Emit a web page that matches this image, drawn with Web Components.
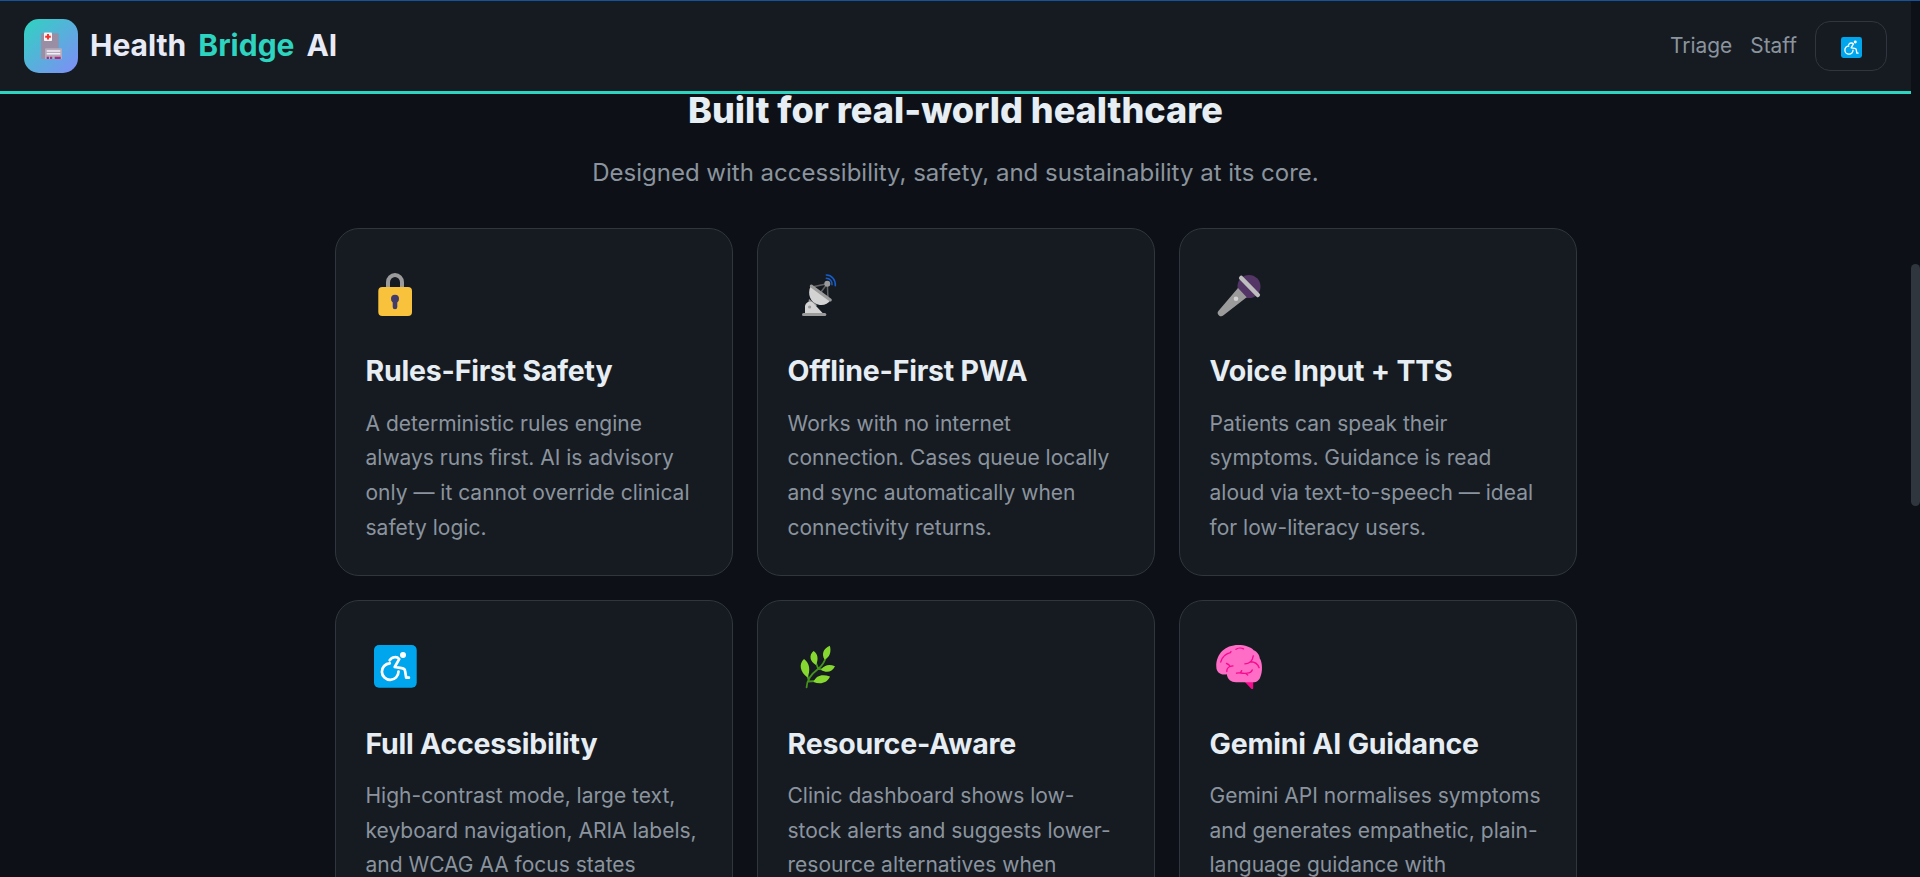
<!DOCTYPE html>
<html lang="en">
<head>
<meta charset="utf-8">
<title>Health Bridge AI</title>
<style>
:root {
	--bg: #0d1117;
	--surface: #161b22;
	--line: #30363d;
	--text: #e6edf3;
	--muted: #8b949e;
	--teal: #2dd4bf;
}
html, body { height: 100%; }
body {
	margin: 0;
	overflow: hidden;
	background: var(--bg);
	color: var(--text);
	font-family: Inter, "Liberation Sans", sans-serif;
}
</style>
</head>
<body>
<hb-page>
	<hb-header slot="header">
		<hb-link>Triage</hb-link>
		<hb-link>Staff</hb-link>
	</hb-header>
	<hb-section>
		<span slot="title">Built for real-world healthcare</span>
		<span slot="lead">Designed with accessibility, safety, and sustainability at its core.</span>
		<hb-card icon="lock"><span slot="title">Rules-First Safety</span>A deterministic rules engine<br>always runs first. AI is advisory<br>only — it cannot override clinical<br>safety logic.</hb-card>
		<hb-card icon="dish"><span slot="title">Offline-First PWA</span>Works with no internet<br>connection. Cases queue locally<br>and sync automatically when<br>connectivity returns.</hb-card>
		<hb-card icon="mic"><span slot="title">Voice Input + TTS</span>Patients can speak their<br>symptoms. Guidance is read<br>aloud via text-to-speech — ideal<br>for low-literacy users.</hb-card>
		<hb-card icon="access"><span slot="title">Full Accessibility</span>High-contrast mode, large text,<br>keyboard navigation, ARIA labels,<br>and WCAG AA focus states</hb-card>
		<hb-card icon="herb"><span slot="title">Resource-Aware</span>Clinic dashboard shows low-<br>stock alerts and suggests lower-<br>resource alternatives when</hb-card>
		<hb-card icon="brain"><span slot="title">Gemini AI Guidance</span>Gemini API normalises symptoms<br>and generates empathetic, plain-<br>language guidance with</hb-card>
	</hb-section>
</hb-page>

<script>
const icons = {
	lock: ['0 0 58 72', `
		<path d="M22 30V23.2a7 7.2 0 0 1 14 0V30" fill="none" stroke="#9b9b9b" stroke-width="4"/>
		<rect x="12.3" y="28" width="33.7" height="29" rx="4" fill="#f9c23c"/>
		<path d="M29 40v8" stroke="#433b6b" stroke-width="4.6" stroke-linecap="round"/>
		<circle cx="29" cy="39.8" r="4" fill="#433b6b"/>`],
	dish: ['0 0 58 72', `
		<path d="M24 28l15.3-3.3L33 33M39.3 24.7l.7 15" fill="none" stroke="#636363" stroke-width="1.5"/>
		<path d="M21 40l8 6-3 4-6-5z" fill="#9b9b9b"/>
		<path d="M17 54.5v-7.5a5 5 0 0 1 8-3.2L35 54.5z" fill="#d3d3d3"/>
		<circle cx="21.6" cy="48" r="1.6" fill="#9b9b9b"/>
		<path d="M22.5 27.5C19 35 22.5 43.5 30 45.5C35 47 40 45 42.3 41.5z" fill="#d3d3d3"/>
		<path d="M23.3 27l19 14" stroke="#9b9b9b" stroke-width="3" stroke-linecap="round"/>
		<rect x="14" y="54" width="24.3" height="3" rx="1.5" fill="#9b9b9b"/>
		<circle cx="39.3" cy="24.8" r="3" fill="#9b9b9b"/>
		<path d="M38.3 16c5.5 0 9.5 5 9 10.8M38.3 19.3c3.6 0 6.1 3 5.7 6.4" fill="none" stroke="#155ecb" stroke-width="1.5" stroke-linecap="round"/>`],
	mic: ['0 0 58 72', `
		<circle cx="39" cy="27.5" r="11.5" fill="#533566"/>
		<path d="M28 29l8.7 9.3L13.5 56.2a3.3 3.3 0 0 1-4.7-4.8z" fill="#9b9b9b"/>
		<path d="M31.2 19l16.6 17" stroke="#bebebe" stroke-width="4.5" stroke-linecap="round"/>
		<circle cx="26" cy="39.7" r="2.3" fill="#d3d3d3"/>`],
	access: ['0 0 58 72', `
		<rect x="8" y="14" width="42.7" height="42.7" rx="5" fill="#00a6ed"/>
		<circle cx="37" cy="24" r="3" fill="#fff"/>
		<path d="M23.7 29.3C26 25.5 31 25.3 33.2 28.1L28.7 36l7 1.1C37.5 37.4 38.8 38 39 39.5l1.2 7.2h2.7M23.8 32.3a8.3 8.3 0 1 0 8.7 8.3" fill="none" stroke="#fff" stroke-width="2.7" stroke-linecap="round" stroke-linejoin="round"/>`],
	herb: ['0 0 58 72', `
		<path d="M18.6 56.3C18.8 49 24 42.5 30 38C34 35 36.5 31 38 26M28 32l2.3 6 6 .5M19 43l2 7.500 6-.5" fill="none" stroke="#44911b" stroke-width="1.8" stroke-linecap="round"/>
		<path d="M16 28C10.5 33 12 41 19.5 46.5C22.5 40 22 32 16 28zM25.5 20C20.5 24.5 22 30.5 28 34C31 28 29.5 22 25.5 20zM41.8 14.7C35 18 33.5 23 36.5 28.5C42 26.5 43.5 20 41.8 14.7zM47 35.2C41 33 36.5 34 33 38.7C38.5 42.5 44 41 47 35.2zM42 45.5C33.5 43 28.5 44.5 25.5 51C32 53.5 39 52.5 42 45.5z" fill="#86d72f"/>`],
	brain: ['0 0 58 72', `
		<path d="M34 50h9.2v7.2c0 1-1.5 1.2-2.2.3z" fill="#f70a8d"/>
		<path d="M6.3 35.7C6 23 15 14 28.3 14C35 14 41 16 43.7 19.2C47 20.5 49.5 23.5 49.8 27.5C52.5 31 52.7 41 50.5 45.5C49.5 49 47 51.3 43 51.3H26C21 51.3 17.5 48.5 16.8 43.3C10.5 44.5 6.3 41 6.3 35.7z" fill="#ff6dc6"/>
		<path d="M10.7 31c1.5-5 5.3-8.3 9.7-9.3l.6-1.2M26 18.3c2-1.5 5.5-1.6 7.5-.4M16.5 32.5c2 .5 3 1.5 3.5 3l3-.6M20 35.5c-2.3 1-3.3 3-3.2 5M34.8 32.8c3.8 0 7.7-2.5 8.5-8M40.5 30.7c4.2 0 7.3 2.3 8.6 6M26.5 42.2c4.5-1 8 1 10.5 0c2.7-.2 4.6-1.2 5.2-3.2M30.5 41.7l1.2-2M35.5 42.3l2.2 1.7" fill="none" stroke="#f70a8d" stroke-width="1.35" stroke-linecap="round"/>`],
	hospital: ['0 0 54 54', `
		<path d="M17 15.3a1 1 0 0 1 1-1h15.700a1 1 0 0 1 1 1V40H17z" fill="#998ea4"/>
		<path d="M21 30.3a1 1 0 0 1 1-1h15a1 1 0 0 1 1 1V40H21z" fill="#b4acbc"/>
		<path d="M22.7 32H36.3M22.7 34.7H36.3" stroke="#f3eef8" stroke-width="1.5"/>
		<path d="M22.7 38.8h2.2M26 38.8h2.2M30.7 38.8h6" stroke="#ac2b7f" stroke-width="2.3"/>
		<rect x="20" y="13.5" width="8" height="8.5" rx=".8" fill="#f4f4f4"/>
		<path d="M24 15v5.6M21.2 17.8h5.6" stroke="#f8312f" stroke-width="1.9"/>`]
};

class HbIcon extends HTMLElement {
	constructor() { super();
		this.attachShadow({mode: 'open'});
	}
	connectedCallback(){
		const [box, art] = icons[this.getAttribute('name')];
		const crop = this.getAttribute('crop');
		this.shadowRoot.innerHTML = `
		<style>
		:host { display: block; }
		svg { display: block; width: 100%; height: 100%; }
		</style>
		<svg viewBox="${crop || box}" aria-hidden="true">${art}</svg>`;
	}
}
customElements.define('hb-icon', HbIcon);

class HbLink extends HTMLElement {
	constructor() { super();
		this.attachShadow({mode: 'open'}).innerHTML = `
		<style>
		:host { display: block; color: var(--muted); font-size: 20.9px; line-height: 30px; cursor: pointer; }
		</style>
		<slot></slot>`;
	}
}
customElements.define('hb-link', HbLink);

class HbHeader extends HTMLElement {
	constructor() { super();
		this.attachShadow({mode: 'open'}).innerHTML = `
		<style>
		:host {
			display: flex;
			align-items: center;
			justify-content: space-between;
			box-sizing: border-box;
			height: 94px;
			padding: 0 24px;
			background: var(--surface);
			border-top: 1px solid #1553a0;
			border-bottom: 3px solid var(--teal);
		}
		.brand, nav { display: flex; align-items: center; }
		.brand { gap: 12px; }
		.logo {
			width: 54px;
			height: 54px;
			border-radius: 15px;
			background: linear-gradient(135deg, #2dd4bf, #818cf8);
		}
		.name {
			display: flex;
			gap: 12px;
			padding-bottom: 2px;
			font-size: 30px;
			font-weight: 700;
			line-height: 36px;
			color: #e8eaf6;
		}
		.name b { color: var(--teal); font-weight: 700; }
		nav { gap: 18px; }
		button {
			display: flex;
			align-items: center;
			justify-content: center;
			width: 72px;
			height: 50px;
			padding: 3px 0 0;
			box-sizing: border-box;
			border: 1px solid var(--line);
			border-radius: 15px;
			background: none;
		}
		button hb-icon { width: 21px; height: 21px; }
		</style>
		<div class="brand">
			<hb-icon class="logo" name="hospital"></hb-icon>
			<div class="name"><span>Health</span><b>Bridge</b><span>AI</span></div>
		</div>
		<nav>
			<slot></slot>
			<button aria-label="Accessibility"><hb-icon name="access" crop="8 14 42.7 42.7"></hb-icon></button>
		</nav>`;
	}
}
customElements.define('hb-header', HbHeader);

class HbCard extends HTMLElement {
	constructor() { super();
		this.attachShadow({mode: 'open'});
	}
	connectedCallback(){
		this.shadowRoot.innerHTML = `
		<style>
		:host {
			display: block;
			box-sizing: border-box;
			height: 348.4px;
			padding: 30px;
			background: var(--surface);
			border: 1px solid var(--line);
			border-radius: 24px;
		}
		hb-icon { width: 58px; height: 72px; margin-bottom: 22.2px; }
		h3 {
			margin: 0 0 17.5px;
			font-size: 28.5px;
			font-weight: 700;
			line-height: 36px;
			letter-spacing: -.22px;
		}
		p {
			margin: 0;
			color: var(--muted);
			font-size: 21px;
			line-height: 1.65;
			white-space: nowrap;
		}
		</style>
		<hb-icon name="${this.getAttribute('icon')}"></hb-icon>
		<h3><slot name="title"></slot></h3>
		<p><slot></slot></p>`;
	}
}
customElements.define('hb-card', HbCard);

class HbSection extends HTMLElement {
	constructor() { super();
		this.attachShadow({mode: 'open'}).innerHTML = `
		<style>
		:host { display: block; text-align: center; }
		h2 {
			margin: 0 0 23px;
			font-size: 36px;
			font-weight: 800;
			line-height: 44px;
		}
		.lead {
			margin: 0 0 37px;
			color: var(--muted);
			font-size: 24px;
			line-height: 36px;
		}
		.grid {
			display: grid;
			grid-template-columns: repeat(3, 398px);
			justify-content: center;
			gap: 24px;
			text-align: left;
		}
		</style>
		<h2><slot name="title"></slot></h2>
		<p class="lead"><slot name="lead"></slot></p>
		<div class="grid"><slot></slot></div>`;
	}
}
customElements.define('hb-section', HbSection);

class HbPage extends HTMLElement {
	constructor() { super();
		this.attachShadow({mode: 'open'}).innerHTML = `
		<style>
		:host {
			display: grid;
			grid-template-columns: 1fr 9px;
			height: 100vh;
			overflow: hidden;
		}
		main { min-width: 0; }
		.content { margin-top: -6px; }
		header { position: relative; z-index: 1; }
		.bar { padding-top: 263px; border-top: 1px solid #1553a0; }
		.thumb { height: 242px; border-radius: 4.5px; background: #30363d; }
		</style>
		<main>
			<header><slot name="header"></slot></header>
			<div class="content"><slot></slot></div>
		</main>
		<div class="bar"><div class="thumb"></div></div>`;
	}
}
customElements.define('hb-page', HbPage);
</script>
</body>
</html>
